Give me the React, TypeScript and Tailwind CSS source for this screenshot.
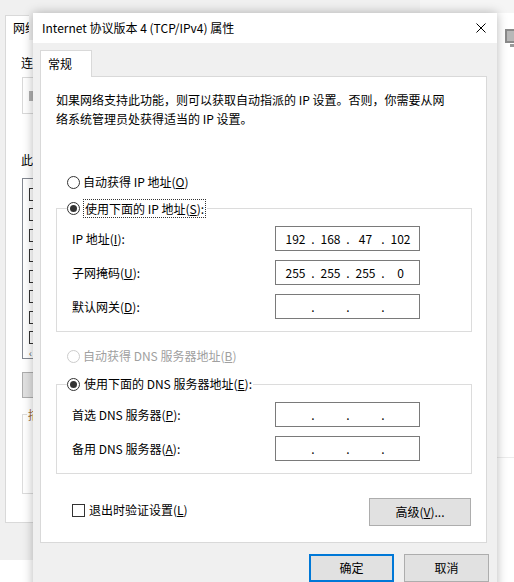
import React from 'react';

const Radio = ({ checked, disabled }: { checked?: boolean; disabled?: boolean }) => (
  <span className={`flex h-[13px] w-[13px] shrink-0 items-center justify-center rounded-full border bg-white ${disabled ? 'border-[#cccccc]' : 'border-[#333333]'}`}>
    {checked && <span className="h-[7px] w-[7px] rounded-full bg-[#333333]" />}
  </span>
);

const IpBox = ({ parts }: { parts: string[] }) => (
  <div className="flex h-[25px] w-[145px] shrink-0 items-center border border-[#7a7a7a] bg-white pl-[2px]">
    {parts.map((p, i) => (
      <React.Fragment key={i}>
        {i > 0 && <span className="flex w-0 justify-center">.</span>}
        <span className="w-[35px] text-center">{p}</span>
      </React.Fragment>
    ))}
  </div>
);

const Row = ({ label, parts }: { label: React.ReactNode; parts: string[] }) => (
  <div className="flex items-center">
    <span className="w-[203px]">{label}</span>
    <IpBox parts={parts} />
  </div>
);

// the Ethernet properties window behind, mostly covered by the dialog
const BackWindow = () => (
  <div className="absolute left-0 top-0 flex h-[560px] w-[420px] flex-col bg-[#f0f0f0] pl-[5px] pt-[15px]">
    <div className="flex">
      <div className="h-[25px] w-[24px] overflow-hidden whitespace-nowrap border border-b-0 border-r-0 border-[#d9d9d9] bg-white pl-[7px] leading-[24px]">网络</div>
    </div>
    <div className="flex h-[483px] w-[405px] flex-col border border-t-0 border-[#d9d9d9] bg-white pl-[15px] pt-[14px]">
      <div className="leading-[18px]">连</div>
      <div className="ml-[1px] mt-[5px] flex h-[37px] w-[370px] items-center border border-[#d9d9d9] px-[6px]">
        <span className="h-[10px] w-[12px] bg-[#b0b0b0]" />
      </div>
      <div className="mt-[37px] leading-[18px]">此</div>
      <div className="ml-[1px] mt-[9px] flex h-[181px] w-[370px] flex-col border border-[#828790] pl-[6px] pt-[5px]">
        {[0, 1, 2, 3, 4, 5, 6, 7].map(i => (
          <div key={i} className="flex h-[21px] items-center">
            <span className="h-[13px] w-[13px] border border-[#333333]" />
          </div>
        ))}
        <div className="text-[10px] leading-[10px] text-[#606060]">‹</div>
      </div>
      <div className="ml-[1px] mt-[13px] h-[26px] w-[85px] border border-[#adadad] bg-[#e1e1e1]" />
      <div className="ml-[1px] mt-[16px] h-[80px] w-[370px] border border-[#dcdcdc] pl-[4px]">
        <span className="-mt-[9px] block w-fit bg-white px-[1px] text-[#9a6a3a]">描</span>
      </div>
    </div>
  </div>
);

export default function App() {
  return (
    <div className="relative h-[582px] w-[514px] overflow-hidden bg-white font-['Noto_Sans_CJK_SC',sans-serif] text-[12px] text-black">
      <BackWindow />
      <div className="absolute left-[420px] top-0 h-[13px] w-[94px] bg-[#f5f5f5]" />
      <svg className="absolute left-[503px] top-[28px]" width="20" height="26" viewBox="0 0 20 26">
        <rect x="2" y="1" width="16" height="14" fill="#8a8a8a" />
        <rect x="4" y="3" width="12" height="10" fill="#b8b8b8" />
        <rect x="7" y="16" width="6" height="3" fill="#9a9a9a" />
      </svg>
      <div className="absolute left-[497px] top-[457px] h-px w-[17px] bg-[#ececec]" />

      <div className="absolute left-[33px] top-[13px] flex h-[580px] w-[464px] flex-col bg-[#f0f0f0] shadow-[0_0_10px_rgba(0,0,0,0.28)]">
        <div className="flex h-[30px] shrink-0 items-center justify-between bg-white pl-[9px] pr-[11px]">
          <span>Internet 协议版本 4 (TCP/IPv4) 属性</span>
          <svg width="10" height="10" viewBox="0 0 10 10">
            <path d="M0.5 0.5 L9.5 9.5 M9.5 0.5 L0.5 9.5" stroke="#000" strokeWidth="1" />
          </svg>
        </div>

        <div className="flex flex-col pl-[7px] pt-[7px]">
          <div className="relative z-10 -mb-px flex h-[27px] w-[52px] items-center border border-b-0 border-[#d9d9d9] bg-white pl-[7px]">常规</div>
          <div className="flex h-[467px] w-[447px] flex-col border border-[#d9d9d9] bg-white pl-[15px] pr-[14px] pt-[13px]">
            <p className="leading-[19px]">
              如果网络支持此功能，则可以获取自动指派的 IP 设置。否则，你需要从网<br />
              络系统管理员处获得适当的 IP 设置。
            </p>

            <div className="ml-[11px] mt-[44px] flex h-[20px] items-center gap-[3px]">
              <Radio />
              <span>自动获得 IP 地址(<span className="underline">O</span>)</span>
            </div>

            <fieldset className="mt-[6px] border border-[#dcdcdc] pb-[12px] pl-[15px]">
              <legend className="-ml-[5px] flex h-[20px] items-center gap-[3px] pr-[1px]">
                <Radio checked />
                <span className="border border-dotted border-[#333333] px-[1px] leading-[17px]">使用下面的 IP 地址(<span className="underline">S</span>):</span>
              </legend>
              <div className="mt-[8px] flex flex-col gap-[9px]">
                <Row label={<>IP 地址(<span className="underline">I</span>):</>} parts={['192', '168', '47', '102']} />
                <Row label={<>子网掩码(<span className="underline">U</span>):</>} parts={['255', '255', '255', '0']} />
                <Row label={<>默认网关(<span className="underline">D</span>):</>} parts={['', '', '', '']} />
              </div>
            </fieldset>

            <div className="ml-[11px] mt-[14px] flex h-[20px] items-center gap-[3px] text-[#a0a0a0]">
              <Radio disabled />
              <span>自动获得 DNS 服务器地址(<span className="underline">B</span>)</span>
            </div>

            <fieldset className="mt-[8px] border border-[#dcdcdc] pb-[12px] pl-[15px]">
              <legend className="-ml-[5px] flex h-[20px] items-center gap-[4px] pr-[1px]">
                <Radio checked />
                <span>使用下面的 DNS 服务器地址(<span className="underline">E</span>):</span>
              </legend>
              <div className="mt-[8px] flex flex-col gap-[9px]">
                <Row label={<>首选 DNS 服务器(<span className="underline">P</span>):</>} parts={['', '', '', '']} />
                <Row label={<>备用 DNS 服务器(<span className="underline">A</span>):</>} parts={['', '', '', '']} />
              </div>
            </fieldset>

            <div className="mt-[24px] flex items-start justify-between">
              <div className="ml-[16px] mt-[3px] flex items-center gap-[4px]">
                <span className="h-[13px] w-[13px] border border-[#333333] bg-white" />
                <span>退出时验证设置(<span className="underline">L</span>)</span>
              </div>
              <button className="mr-px h-[28px] w-[102px] border border-[#adadad] bg-[#e1e1e1]">高级(<span className="underline">V</span>)...</button>
            </div>
          </div>
        </div>

        <div className="mr-[8px] mt-[11px] flex justify-end gap-[10px]">
          <button className="h-[28px] w-[85px] border-2 border-[#0078d7] bg-[#e1e1e1]">确定</button>
          <button className="h-[28px] w-[85px] border border-[#adadad] bg-[#e1e1e1]">取消</button>
        </div>
      </div>
    </div>
  );
}
